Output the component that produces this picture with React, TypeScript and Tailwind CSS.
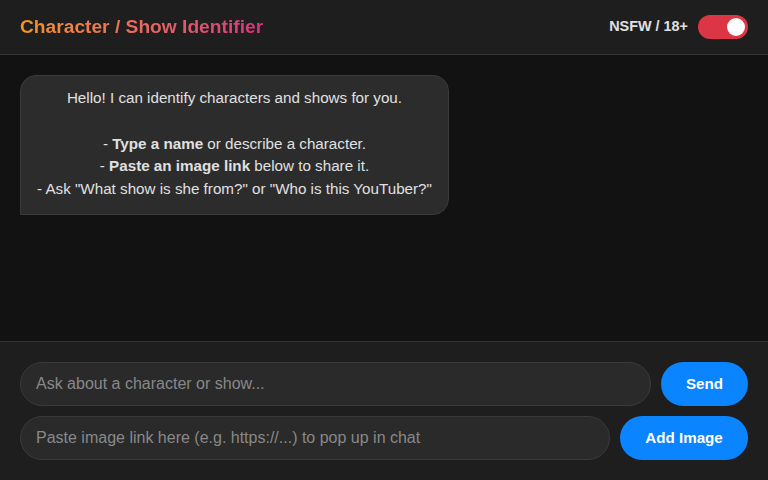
import { useState } from 'react'

export default function App() {
  const [nsfw, setNsfw] = useState(true)

  return (
    <div className="flex h-[480px] w-[768px] flex-col bg-[#121212] font-['Liberation_Sans',Arial,sans-serif] text-[#e0e0e0]">
      {/* Header */}
      <header className="flex h-[55px] shrink-0 items-center justify-between border-b border-[#333] bg-[#1e1e1e] px-5">
        <h1 className="bg-gradient-to-r from-[#f7931e] to-[#d6327e] bg-clip-text text-[19.2px] font-bold text-transparent">
          Character / Show Identifier
        </h1>
        <div className="flex items-center gap-[10px]">
          <span className="text-[14.4px] font-bold text-[#e0e0e0]">NSFW / 18+</span>
          <button
            onClick={() => setNsfw(!nsfw)}
            className={`flex h-6 w-[50px] items-center rounded-full px-[3px] ${nsfw ? 'justify-end bg-[#dc3545]' : 'justify-start bg-[#555]'}`}
          >
            <span className="h-[18px] w-[18px] rounded-full bg-white" />
          </button>
        </div>
      </header>

      {/* Messages */}
      <main className="flex flex-1 flex-col items-start p-5">
        <div className="rounded-2xl rounded-bl-none border border-[#3a3a3a] bg-[#2c2c2c] px-4 pt-[11px] pb-[13px] text-center text-[15.2px] leading-[22.8px]">
          <p>Hello! I can identify characters and shows for you.</p>
          <br />
          <p>
            - <b>Type a name</b> or describe a character.
          </p>
          <p>
            - <b>Paste an image link</b> below to share it.
          </p>
          <p>- Ask "What show is she from?" or "Who is this YouTuber?"</p>
        </div>
      </main>

      {/* Input area */}
      <footer className="flex shrink-0 flex-col gap-[10px] border-t border-[#333] bg-[#1e1e1e] p-5">
        <div className="flex gap-[10px]">
          <input
            placeholder="Ask about a character or show..."
            className="h-11 flex-1 rounded-full border border-[#3a3a3a] bg-[#2a2a2a] px-[15px] text-[16px] text-[#e0e0e0] outline-none placeholder:text-[#888]"
          />
          <button className="h-11 w-[87px] rounded-full bg-[#0a84ff] text-[15.2px] font-bold text-white">Send</button>
        </div>
        <div className="flex gap-[10px]">
          <input
            placeholder="Paste image link here (e.g. https://...) to pop up in chat"
            className="h-11 flex-1 rounded-full border border-[#3a3a3a] bg-[#2a2a2a] px-[15px] text-[16px] text-[#e0e0e0] outline-none placeholder:text-[#888]"
          />
          <button className="h-11 w-[128px] rounded-full bg-[#0a84ff] text-[15.2px] font-bold text-white">Add Image</button>
        </div>
      </footer>
    </div>
  )
}
